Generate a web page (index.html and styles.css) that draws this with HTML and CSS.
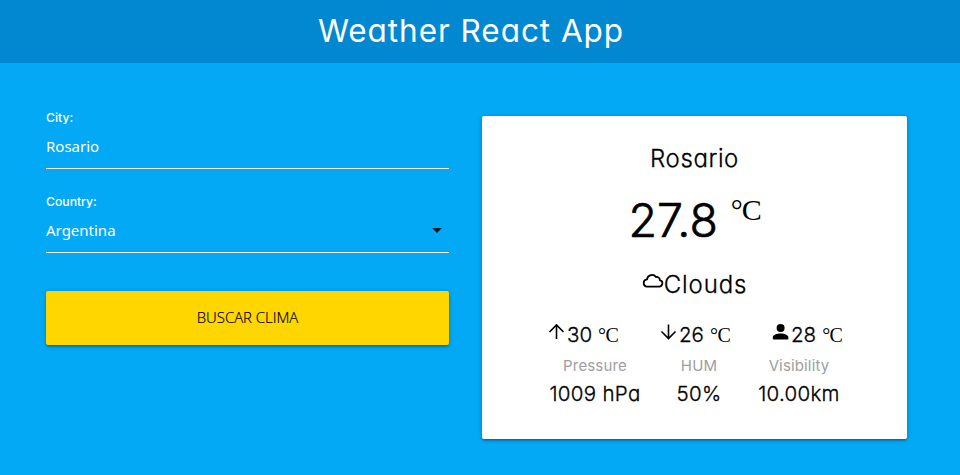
FILE: index.html
```html
<!DOCTYPE html>
<html lang="en">
<head>
<meta charset="utf-8">
<title>Weather React App</title>
<link rel="stylesheet" href="styles.css">
</head>
<body>
<header class="header"><h1>Weather React App</h1></header>
<main class="layout">
  <form class="form">
    <div class="field">
      <label class="label">City:</label>
      <div class="value">Rosario</div>
    </div>
    <div class="field">
      <label class="label">Country:</label>
      <div class="value select"><span>Argentina</span>
        <svg width="10" height="5" viewBox="0 0 10 5"><path d="M0 0h10L5 5z" fill="#0b1f33"/></svg>
      </div>
    </div>
    <button class="button" type="button">BUSCAR CLIMA</button>
  </form>
  <section class="card">
    <h2 class="city">Rosario</h2>
    <div class="temp"><span class="degrees">27.8</span><span class="unit unit-big">°C</span></div>
    <div class="sky">
      <svg width="22" height="22" viewBox="0 0 22 22" fill="none" stroke="#000" stroke-width="1.8"><path d="M4.600 15.600h12.500a3.300 3.300 0 0 0 .8-6.500A3.300 3.300 0 0 0 14 6 5 5 0 0 0 5 8.300a3.700 3.700 0 0 0-.4 7.300z"/></svg>
      <span>Clouds</span>
    </div>
    <div class="range">
      <div class="reading"><svg width="18" height="20" viewBox="0 0 18 20" fill="none" stroke="#000" stroke-width="1.6"><path d="M8.500 17V3M1.500 10l7-7 7 7"/></svg><span class="num">30</span><span class="unit">°C</span></div>
      <div class="reading"><svg width="18" height="20" viewBox="0 0 18 20" fill="none" stroke="#000" stroke-width="1.6"><path d="M8.500 2.500v14M1.500 9.500l7 7 7-7"/></svg><span class="num">26</span><span class="unit">°C</span></div>
      <div class="reading"><svg width="18" height="20" viewBox="0 0 18 20"><circle cx="8.600" cy="6" r="4"/><path d="M.8 16.500v-1c0-2.500 4-4 7.800-4s7.800 1.500 7.800 4v1q0 1-1 1H1.800q-1 0-1-1z"/></svg><span class="num">28</span><span class="unit">°C</span></div>
    </div>
    <div class="stats">
      <div class="stat"><span class="name">Pressure</span><span class="amount">1009 hPa</span></div>
      <div class="stat"><span class="name">HUM</span><span class="amount">50%</span></div>
      <div class="stat"><span class="name">Visibility</span><span class="amount">10.00km</span></div>
    </div>
  </section>
</main>
</body>
</html>
```
FILE: styles.css
```css
* { box-sizing: border-box; }
body {
  margin: 0;
  height: 475px;
  overflow: hidden;
  background: #03a9f4;
  color: #000;
  font-family: Inter, "Open Sans", sans-serif;
  font-feature-settings: "cv11";
}
.header {
  height: 63px;
  padding-right: 18px;
  background: #0288d1;
  color: #fff;
  text-align: center;
}
h1 { margin: 0; font-size: 31.500px; font-weight: 400; line-height: 62px; white-space: nowrap; letter-spacing: .95px; }
.layout { display: flex; gap: 33px; padding-left: 46px; }
.form { width: 403px; padding-top: 44px; color: #fff; }
.field { height: 84px; }
.label { display: block; height: 22px; line-height: 22px; font-size: 12.200px; font-weight: 500; }
.value {
  height: 40px;
  border-bottom: 1px solid #fff;
  line-height: 35px;
  font-family: "Noto Sans", "Open Sans", sans-serif;
  font-size: 15px;
}
.select { display: flex; justify-content: space-between; padding-right: 7px; }
.select svg { margin-top: 15px; }
.button {
  display: block;
  width: 403px;
  height: 54px;
  margin-top: 16px;
  padding: 0 0 2px;
  border: 0;
  border-radius: 2px;
  background: #ffd600;
  box-shadow: 0 2px 2px rgba(0,0,0,.14), 0 3px 1px -2px rgba(0,0,0,.12), 0 1px 5px rgba(0,0,0,.2);
  color: #000;
  font: 300 14.900px/52px "Open Sans", sans-serif;
  -webkit-text-stroke: .2px #000;
}
.card {
  width: 425px;
  height: 323px;
  margin-top: 53px;
  padding-top: 23px;
  border-radius: 2px;
  background: #fff;
  box-shadow: 0 2px 2px rgba(0,0,0,.14), 0 3px 1px -2px rgba(0,0,0,.12), 0 1px 5px rgba(0,0,0,.2);
}
.city, .degrees, .sky, .num, .amount { font-weight: 300; -webkit-text-stroke: .3px #000; }
.city { margin: 0; height: 40px; line-height: 40px; font-size: 24px; letter-spacing: .6px; text-align: center; }
.temp { display: flex; justify-content: center; height: 76px; }
.degrees { line-height: 82px; font-size: 46.500px; -webkit-text-stroke-width: .7px; }
.unit { font-family: "Liberation Serif", serif; font-size: 20px; letter-spacing: -.5px; margin-left: 6px; }
.unit-big { margin-left: 13px; font-size: 30px; line-height: 62px; letter-spacing: -1.200px; }
.sky { display: flex; justify-content: center; height: 60px; line-height: 60px; font-size: 24px; letter-spacing: .9px; }
.sky svg { margin-top: 16px; }
.range { display: flex; gap: 40px; padding-left: 66px; height: 40px; }
.reading { display: flex; width: 72px; line-height: 40px; white-space: nowrap; }
.reading svg { flex: none; margin-top: 7px; }
.num { margin-left: 1px; font-size: 20.500px; }
.stats { display: grid; grid-template-columns: 92px 42px 84px; gap: 37px; padding-left: 67px; text-align: center; white-space: nowrap; }
.stat { display: flex; flex-direction: column; align-items: center; }
.name { line-height: 22px; font-size: 15px; color: #9e9e9e; letter-spacing: .15px; }
.amount { line-height: 34px; font-size: 20.500px; letter-spacing: .3px; }
```
